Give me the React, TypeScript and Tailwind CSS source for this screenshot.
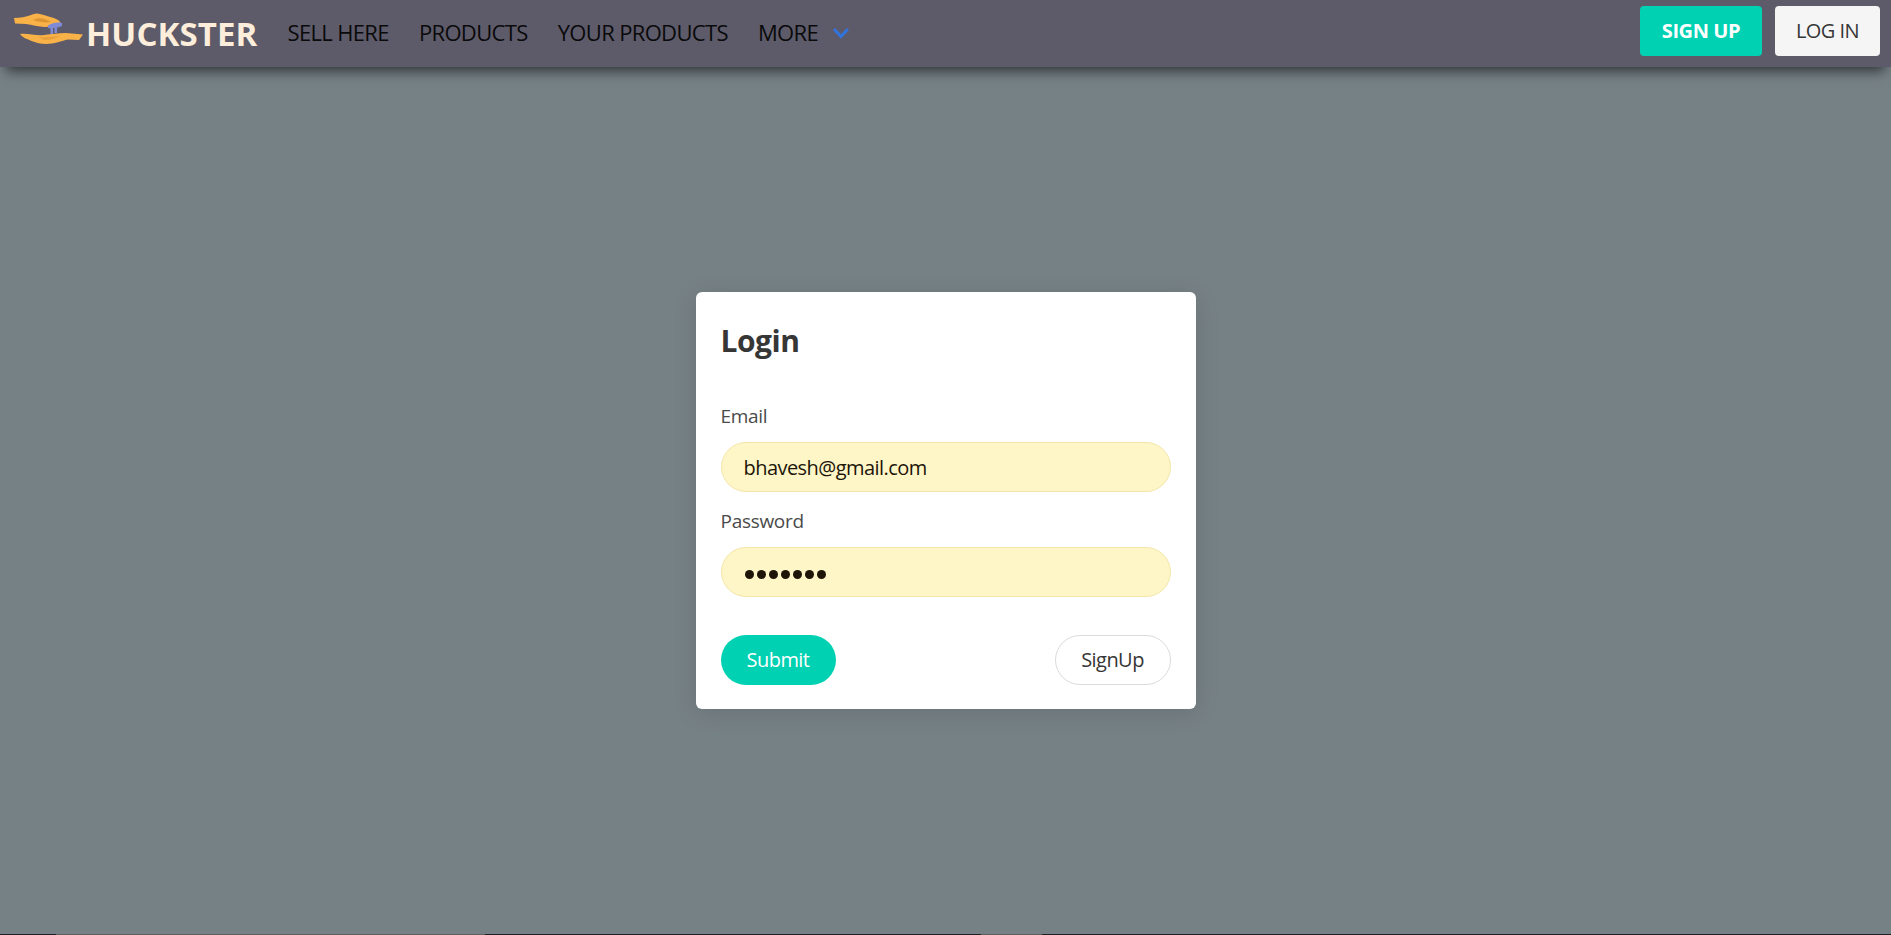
const font = { fontFamily: '"Open Sans", sans-serif' };

function Logo() {
  return (
    <svg width="72" height="36" viewBox="13 11 72 36" className="shrink-0 mb-[8px]">
      <path d="M14 17 C20 17 26 16 31 14 C34 12.5 37 12 40 13 C46 15 53 16 58 19 C60 20 61 22 60 24 C55 24 50 26 45 26 C38 25.5 32 24 26 23 L15 22.5 Z" fill="#f9b248" />
      <path d="M33 19 C38 16 45 17 51 21 C46 22 38 21 33 19 Z" fill="#dd9533" />
      <path d="M48 24.5 C52 22 57 21 62 22 L62 25 C58 27 52 27.5 48 27 Z" fill="#7f8ad6" />
      <path d="M50.5 27 H53 V33 H50.5 Z M54.5 27 H57 V32 H54.5 Z" fill="#7f8ad6" />
      <path d="M20 33 C28 32 36 35 44 34 C52 33 58 32 66 32 L83 33.5 L79 39 L68 38.5 C62 40 54 43 46 43 C38 43 32 40 27 38 C24 37 22 35.5 20 33 Z" fill="#f9b248" />
      <path d="M38 36 C45 36.5 52 36 60 35 C55 38 49 39.5 44 39 Z" fill="#e9a03c" />
    </svg>
  );
}

function NavLink({ children }: { children: string }) {
  return <a className="text-[22px] tracking-[-0.65px] text-[#0a0a0a] whitespace-nowrap">{children}</a>;
}

export default function App() {
  return (
    <div className="flex flex-col h-[935px] overflow-hidden bg-[#768186]" style={font}>
      <nav className="relative z-10 flex items-center justify-between h-[67px] shrink-0 bg-[#5d5b6a] shadow-[0_10px_12px_-6px_rgba(0,0,0,0.6)]">
        <div className="flex items-center">
          <div className="flex items-center pl-[13px]">
            <Logo />
            <span className="ml-[1px] text-[33px] font-bold tracking-[0.1px] text-[#fdeedc] leading-none">HUCKSTER</span>
          </div>
          <div className="flex items-center gap-[30px] ml-[30px] mb-[2px]">
            <NavLink>SELL HERE</NavLink>
            <NavLink>PRODUCTS</NavLink>
            <NavLink>YOUR PRODUCTS</NavLink>
            <div className="flex items-center gap-[14px]">
              <NavLink>MORE</NavLink>
              <svg width="18" height="12" viewBox="0 0 18 12" fill="none" stroke="#3273dc" strokeWidth="3">
                <path d="M2 2 L9 9.5 L16 2" />
              </svg>
            </div>
          </div>
        </div>
        <div className="flex items-center gap-[13px] pr-[11px] pb-[5px]">
          <button className="flex items-center justify-center w-[122px] h-[50px] rounded-[4px] bg-[#00d1b2] text-[20px] font-bold tracking-[-0.4px] text-white">SIGN UP</button>
          <button className="flex items-center justify-center w-[105px] h-[50px] rounded-[4px] bg-[#f5f5f5] text-[20px] tracking-[-0.55px] text-[#363636]">LOG IN</button>
        </div>
      </nav>
      <main className="flex flex-1 flex-col items-center pt-[225px]">
        <form className="w-[500px] h-[417px] rounded-[6px] bg-white p-[25px] shadow-[0_4px_24px_rgba(0,0,0,0.12)]">
          <h1 className="text-[30px] font-bold leading-[48px] tracking-[-0.5px] text-[#363636]">Login</h1>
          <label className="block mt-[37px] text-[19px] leading-[28px] tracking-[-0.3px] text-[#4a4a4a]">Email</label>
          <div className="mt-[12px] flex items-center h-[50px] rounded-full border border-[#f3e6a8] bg-[#fff6c8] pl-[22px] pt-[2px] text-[20px] tracking-[-0.55px] text-[#1c1508]">bhavesh@gmail.com</div>
          <label className="block mt-[15px] text-[19px] leading-[28px] tracking-[-0.3px] text-[#4a4a4a]">Password</label>
          <div className="mt-[12px] flex items-center gap-[3px] h-[50px] rounded-full border border-[#f3e6a8] bg-[#fff6c8] pl-[23px]">
            {[0, 1, 2, 3, 4, 5, 6].map((i) => (
              <span key={i} className="block w-[9px] h-[9px] rounded-full bg-[#1c1508] mt-[5px]" />
            ))}
          </div>
          <div className="flex items-center justify-between mt-[38px]">
            <button type="button" className="w-[115px] h-[50px] rounded-full bg-[#00d1b2] text-[20px] tracking-[-0.55px] text-white">Submit</button>
            <button type="button" className="w-[116px] h-[50px] rounded-full border border-[#dbdbdb] bg-white text-[20px] tracking-[-0.55px] text-[#363636]">SignUp</button>
          </div>
        </form>
      </main>
      <div className="flex h-px shrink-0 bg-[#202124]">
        <div className="w-[56px]" />
        <div className="w-[429px] bg-[#5f5f5f]" />
        <div className="w-[496px]" />
        <div className="w-[61px] bg-[#5f5f5f]" />
      </div>
    </div>
  );
}
